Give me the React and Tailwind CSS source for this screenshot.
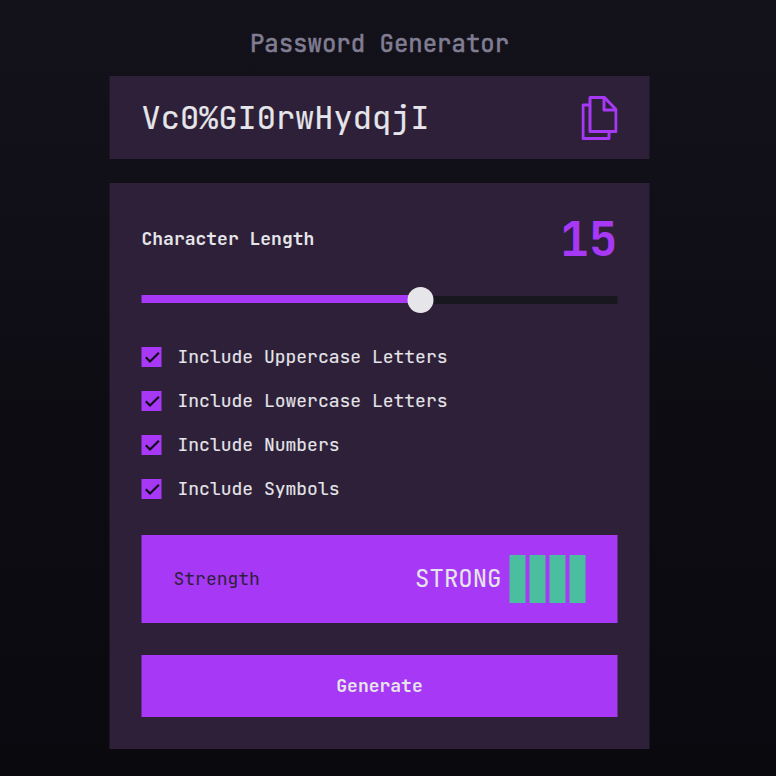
import React from "react";

const options = [
  "Include Uppercase Letters",
  "Include Lowercase Letters",
  "Include Numbers",
  "Include Symbols",
];

function CopyIcon() {
  return (
    <svg className="h-11 w-9 shrink-0" viewBox="0 0 36 44" fill="none" stroke="#a638f6" strokeWidth="3" strokeLinejoin="round">
      <path d="M8.5 1.5h14.5l11.5 12v22h-26z" />
      <path d="M22.5 1.5v12.5h12" />
      <path d="M8.5 9h-7v33.5h26v-7" />
    </svg>
  );
}

function Check() {
  return (
    <svg className="h-5 w-5" viewBox="0 0 20 20" fill="none" stroke="#100d16" strokeWidth="2.2">
      <path d="M4.3 10.3l4.2 4.2 8.9-8.7" />
    </svg>
  );
}

export default function App() {
  return (
    <div className="h-[776px] w-[776px] overflow-hidden bg-linear-to-b from-[#13111a] to-[#0a090e] font-['JetBrains_Mono','DejaVu_Sans_Mono',monospace] text-[#e6e5ea]">
      <main className="ml-[110px] flex w-[540px] -translate-x-[0.5px] flex-col pt-7">
        <h1 className="h-8 text-center text-[24px] leading-8 text-[#817d92] [-webkit-text-stroke:0.6px_#817d92]">Password Generator</h1>
        <section className="mt-4 flex h-[83px] items-center justify-between bg-[#2d2038] px-8">
          <span className="text-[32px] leading-[42px] [-webkit-text-stroke:0.2px_#e6e5ea]">Vc0%GI0rwHydqjI</span>
          <CopyIcon />
        </section>
        <section className="mt-6 flex h-[566px] flex-col bg-[#2d2038] px-8">
          <div className="mt-[23px] flex h-16 items-center justify-between">
            <h2 className="text-[18px] font-bold">Character Length</h2>
            <span className="text-[48px] leading-[63px] font-bold text-[#a638f6]">15</span>
          </div>
          <div className="mt-[17px] flex h-[26px] items-center">
            <div className="h-2 w-[268px] -translate-y-px bg-[#a638f6]" />
            <div className="z-10 -ml-0.5 size-[26px] shrink-0 rounded-full bg-[#e6e5ea]" />
            <div className="h-2 flex-1 bg-[#18171f]" />
          </div>
          <ul className="mt-[34px] flex flex-col gap-6">
            {options.map((o) => (
              <li key={o} className="flex h-5 items-center gap-4">
                <span className="size-5 bg-[#a638f6]"><Check /></span>
                <span className="text-[18px] leading-5 [-webkit-text-stroke:0.15px_#e6e5ea]">{o}</span>
              </li>
            ))}
          </ul>
          <div className="mt-9 flex h-[88px] items-center bg-[#a638f6] px-8">
            <span className="pb-0.5 text-[18px] text-[#2d2038]">Strength</span>
            <span className="mr-2 ml-auto text-[24px] [-webkit-text-stroke:0.1px_#e6e5ea]">STRONG</span>
            <div className="flex gap-1">
              {[0, 1, 2, 3].map((i) => (
                <div key={i} className="h-12 w-4 bg-[#4cbea0]" />
              ))}
            </div>
          </div>
          <button className="mt-8 h-[62px] bg-[#a638f6] pb-0.5 text-[18px] font-bold">Generate</button>
        </section>
      </main>
    </div>
  );
}
